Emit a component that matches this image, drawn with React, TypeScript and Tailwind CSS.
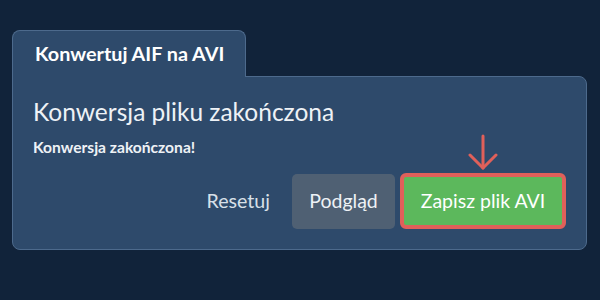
import React from "react";

export default function App() {
  return (
    <div
      className="w-[600px] h-[300px] bg-[#11233a] pt-[30px] px-3"
      style={{ fontFamily: "Lato, 'Noto Sans', sans-serif" }}
    >
      <div className="relative z-10 -mb-px flex h-[47px] w-[234px] items-center rounded-t-lg border border-b-0 border-[#4d6a8c] bg-[#2e4a6b] pl-[22px]">
        <span className="text-[19.8px] font-bold text-white">Konwertuj AIF na AVI</span>
      </div>
      <div className="h-[174px] w-[575px] rounded-lg rounded-tl-none border border-[#4d6a8c] bg-[#2e4a6b] px-5 pt-5 pb-5 flex flex-col">
        <div className="text-[24.5px] leading-[29px] text-[#eef2f6]">Konwersja pliku zakończona</div>
        <div className="mt-3 text-[15.6px] leading-[19px] font-bold text-[#eef2f6]">Konwersja zakończona!</div>
        <div className="mt-auto flex items-center justify-end">
          <button className="mr-[22px] text-[19.6px] text-[#d8e0e8]">Resetuj</button>
          <button className="h-[55px] w-[103px] rounded-[5px] bg-[#4f6073] text-[19.5px] text-[#eef2f6]">Podgląd</button>
          <div className="relative ml-[5px]">
            <svg
              className="absolute left-1/2 -translate-x-1/2 -top-[39px]"
              width="30"
              height="37"
              viewBox="0 0 30 37"
              fill="none"
              stroke="#e0605a"
              strokeWidth="3"
              strokeLinecap="round"
              strokeLinejoin="round"
            >
              <line x1="15" y1="2" x2="15" y2="34" />
              <polyline points="2,21 15,34 28,21" />
            </svg>
            <button className="h-[56px] w-[166px] rounded-[6px] border-4 border-[#e0605a] bg-[#5cb85c] text-[19.5px] text-white">
              Zapisz plik AVI
            </button>
          </div>
        </div>
      </div>
    </div>
  );
}
